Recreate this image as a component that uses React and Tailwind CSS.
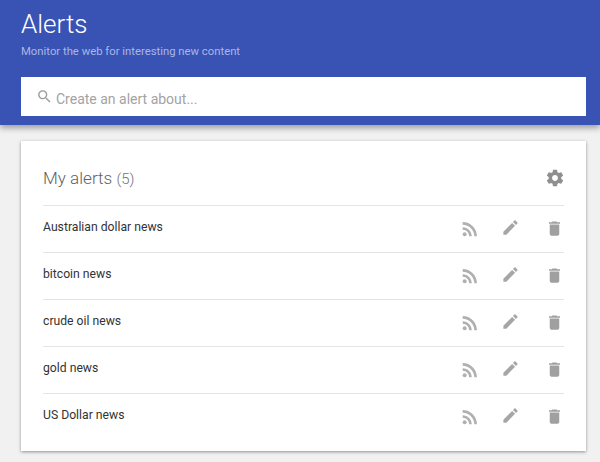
import React from 'react';

const alerts = ['Australian dollar news', 'bitcoin news', 'crude oil news', 'gold news', 'US Dollar news'];

const Icon = ({ d, className, children }) => (
  <svg viewBox="0 0 24 24" className={`shrink-0 fill-current ${className}`}>
    {children}
    <path d={d} />
  </svg>
);

const SEARCH = 'M15.5 14h-.79l-.28-.27C15.41 12.59 16 11.11 16 9.5 16 5.91 13.09 3 9.5 3S3 5.91 3 9.5 5.91 16 9.5 16c1.61 0 3.09-.59 4.23-1.57l.27.28v.79l5 4.99L20.49 19l-4.99-5zm-6 0C7.01 14 5 11.99 5 9.5S7.01 5 9.5 5 14 7.01 14 9.5 11.99 14 9.5 14z';
const GEAR = 'M19.43 12.98c.04-.32.07-.64.07-.98s-.03-.66-.07-.98l2.11-1.65c.19-.15.24-.42.12-.64l-2-3.46c-.12-.22-.39-.3-.61-.22l-2.49 1c-.52-.4-1.08-.73-1.69-.98l-.38-2.65C14.46 2.18 14.25 2 14 2h-4c-.25 0-.46.18-.49.42l-.38 2.65c-.61.25-1.17.59-1.69.98l-2.49-1c-.23-.09-.49 0-.61.22l-2 3.46c-.13.22-.07.49.12.64l2.11 1.65c-.04.32-.07.65-.07.98s.03.66.07.98l-2.11 1.65c-.19.15-.24.42-.12.64l2 3.46c.12.22.39.3.61.22l2.49-1c.52.4 1.08.73 1.69.98l.38 2.65c.03.24.24.42.49.42h4c.25 0 .46-.18.49-.42l.38-2.65c.61-.25 1.17-.59 1.69-.98l2.49 1c.23.09.49 0 .61-.22l2-3.46c.12-.22.07-.49-.12-.64l-2.11-1.65zM12 15.5c-1.93 0-3.5-1.57-3.5-3.5s1.57-3.5 3.5-3.5 3.5 1.57 3.5 3.5-1.57 3.5-3.5 3.5z';
const RSS = 'M4 4.44v2.83c7.03 0 12.73 5.7 12.73 12.73h2.83c0-8.59-6.97-15.56-15.56-15.56zm0 5.66v2.83c3.9 0 7.07 3.17 7.07 7.07h2.83c0-5.47-4.43-9.9-9.9-9.9z';
const EDIT = 'M3 17.25V21h3.75L17.81 9.94l-3.75-3.75L3 17.25zM20.71 7.04c.39-.39.39-1.02 0-1.41l-2.34-2.34c-.39-.39-1.02-.39-1.41 0l-1.83 1.83 3.75 3.75 1.83-1.83z';
const TRASH = 'M6 19c0 1.1.9 2 2 2h8c1.1 0 2-.9 2-2V7H6v12zM19 4h-3.5l-1-1h-5l-1 1H5v2h14V4z';

const App = () => {
  return (
    <div className="w-[600px] h-[462px] overflow-hidden bg-[#f1f1f1] font-['Roboto',sans-serif]">
      <header className="relative h-[125px] bg-[#3953b4] px-[21px] pt-[6px] shadow-[0_3px_6px_rgba(0,0,0,0.35)]">
        <h1 className="text-[26px] leading-[36px] font-light text-white">Alerts</h1>
        <p className="mt-[2px] text-[11.3px] leading-[16px] text-[#aab6e4]">Monitor the web for interesting new content</p>
        <div className="mt-[17px] flex h-[39px] w-[565px] items-center bg-white pl-[15px] pt-[4px]">
          <Icon d={SEARCH} className="mt-[-4px] h-[17px] w-[17px] text-[#9e9e9e]" />
          <span className="ml-[3px] text-[14px] leading-[20px] text-[#a3a3a3]">Create an alert about...</span>
        </div>
      </header>

      <main className="ml-[21px] mt-[16px] h-[310px] w-[565px] bg-white px-[22px] shadow-[0_1px_3px_rgba(0,0,0,0.4)]">
        <div className="flex h-[64px] items-center justify-between pt-[10px]">
          <h2 className="text-[17.1px] leading-[24px] font-light text-[#616161]">
            My alerts <span className="text-[15px] text-[#757575]">(5)</span>
          </h2>
          <Icon d={GEAR} className="h-[20px] w-[20px] text-[#8f8f8f] mr-[-1px]" />
        </div>
        {alerts.map((alert) => (
          <div key={alert} className="flex h-[47px] items-start border-t border-[#e4e4e4]">
            <span className="mt-[12px] flex-1 text-[12.2px] leading-[18px] text-[#333333]">{alert}</span>
            <div className="mt-[12px] flex items-start">
              <Icon d={RSS} className="h-[22px] w-[22px] text-[#b0b0b0]">
                <circle cx="6.18" cy="17.82" r="2.18" />
              </Icon>
              <Icon d={EDIT} className="ml-[20px] h-[19px] w-[19px] text-[#a6a6a6]" />
              <Icon d={TRASH} className="ml-[25px] mt-[1px] h-[19px] w-[19px] text-[#a0a0a0]" />
            </div>
          </div>
        ))}
      </main>
    </div>
  );
};

export default App;
